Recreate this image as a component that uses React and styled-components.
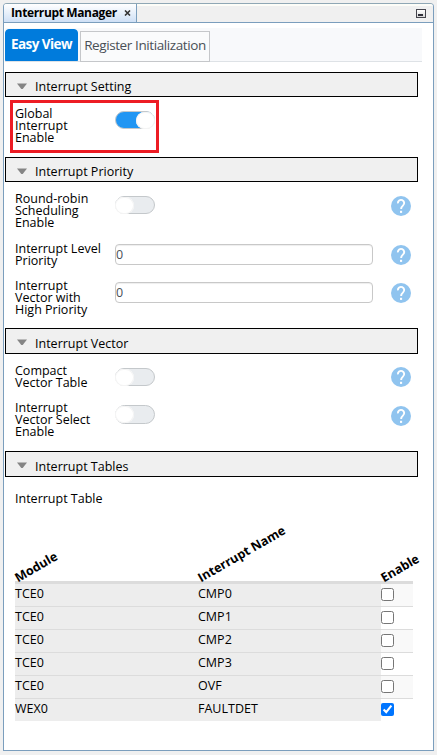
import React, { useState } from "react";
import styled, { createGlobalStyle } from "styled-components";

const Global = createGlobalStyle`
  * { box-sizing: border-box; }
  body { margin: 0; background: #f0f0f0; }
`;

const Page = styled.div`
  width: 437px;
  height: 755px;
  padding: 3px 3px 4px 3px;
  background: #f0f0f0;
  color: #000;
  font: 12.5px/12px "Open Sans", "Noto Sans", sans-serif;
`;

const Window = styled.main`
  width: 431px;
  height: 748px;
  border: 1px solid #7b9ebd;
  border-top-color: #8fa7b5;
  border-radius: 4px 4px 0 0;
  background: #fff;
`;

const TitleBar = styled.header`
  display: flex;
  justify-content: space-between;
  height: 19px;
  border-bottom: 1px solid #7b9ebd;
  border-radius: 3px 3px 0 0;
  background: linear-gradient(#fdfdf8 2px, #f0f0f0 2px);
`;

const WindowTab = styled.div`
  display: flex;
  align-items: center;
  width: 133px;
  height: 18px;
  padding: 0 5px 0 7px;
  border-right: 1px solid #7b9ebd;
  border-radius: 3px 0 0 0;
  background: linear-gradient(#fff, #cfe0f6);
  font-size: 12px;
  font-weight: 700;
  letter-spacing: ${(p) => p.$track || 0}px;
  white-space: nowrap;
`;

const CloseButton = styled.button`
  display: flex;
  margin: 0 0 0 auto;
  padding: 0;
  border: 0;
  background: none;
`;

const MinimizeButton = styled.button`
  width: 10px;
  height: 9px;
  margin: 5px 7px 0 0;
  padding: 4px 1px 1px;
  border: 1px solid #45454d;
  background: linear-gradient(#fff, #d8d8d8);
  &::before {
    content: "";
    display: block;
    width: 5px;
    height: 2px;
    background: #30303a;
  }
`;

const Tabs = styled.nav`
  display: flex;
  align-items: flex-end;
  gap: 2px;
  width: 417px;
  height: 34px;
  margin: 5px 0 0 1px;
  border-bottom: 1px solid #dee2e6;
  background: #f8f9fb;
`;

const Tab = styled.button`
  flex: none;
  width: ${(p) => (p.$active ? 73 : 130)}px;
  height: ${(p) => (p.$active ? 32 : 31)}px;
  margin-bottom: ${(p) => (p.$active ? 0 : -1)}px;
  padding: 0 0 3px;
  border: 1px solid ${(p) => (p.$active ? "#007bdc" : "#c5c7ca")};
  border-radius: ${(p) => (p.$active ? "4px 4px 0 0" : "0")};
  background: ${(p) => (p.$active ? "#007bdc" : "#fafbfc")};
  color: ${(p) => (p.$active ? "#fff" : "#495057")};
  font: ${(p) => (p.$active ? 700 : 400)} 13.5px/16px "Open Sans", "Noto Sans", sans-serif;
  letter-spacing: ${(p) => p.$track}px;
  white-space: nowrap;
`;

const SectionHeader = styled.h2`
  display: flex;
  align-items: center;
  gap: 8px;
  width: 413px;
  height: ${(p) => p.$height}px;
  margin: 0 0 0 1px;
  padding: 5px 0 0 11px;
  border: 1px solid #000;
  background: #f0f0f0;
  font: 400 12.5px/18px "Open Sans", "Noto Sans", sans-serif;
`;

const Arrow = styled.svg`
  display: block;
  margin-top: -3px;
`;

const SectionBody = styled.section`
  height: ${(p) => p.$height}px;
`;

const FirstBody = styled(SectionBody)`
  padding: 3px 0 0 6px;
`;

const Highlight = styled.div`
  width: 149px;
  height: 53px;
  border: 3px solid #ed1c24;
`;

const Row = styled.div`
  display: grid;
  grid-template-columns: 100px 276px 20px;
  align-items: start;
  height: ${(p) => p.$height}px;
  padding-left: ${(p) => (p.$inset ? 2 : 11)}px;
`;

const Label = styled.label`
  padding-top: ${(p) => p.$top}px;
  white-space: pre;
`;

const ToggleTrack = styled.button`
  display: flex;
  justify-content: ${(p) => (p.$on ? "flex-end" : "flex-start")};
  align-items: center;
  width: 40px;
  height: ${(p) => p.$height || 18}px;
  margin: ${(p) => p.$top}px 0 0;
  padding: 0;
  border: 1px solid #c4c8cb;
  border-radius: 10px;
  background: ${(p) => (p.$on ? "#2196f3" : "#e9ecef")};
  &::before {
    content: "";
    flex: none;
    width: 19px;
    height: 17px;
    margin: 0 -1px;
    border-radius: 9px;
    background: #fff;
    box-shadow: inset 0 0 0 1px #f4f4f4;
  }
`;

const NumberInput = styled.input`
  width: 258px;
  height: 21px;
  margin: ${(p) => p.$top}px 0 0;
  padding: 0;
  border: 1px solid #c8c8c8;
  border-radius: 4px;
  outline: 0;
  box-shadow: inset 0 1px 1px #eee;
  background: #fff;
  color: #495057;
  font: 12.5px "Open Sans", "Noto Sans", sans-serif;
`;

const HelpIcon = styled.svg`
  display: block;
  width: 20px;
  height: 20px;
  margin-top: ${(p) => p.$top}px;
`;

const TableTitle = styled.p`
  height: 68px;
  margin: 0;
  padding: 16px 0 0 11px;
  line-height: 12px;
`;

const Table = styled.div`
  width: 398px;
  margin-left: 11px;
`;

const TableRow = styled.div`
  display: grid;
  grid-template-columns: 183px 183px 32px;
  height: ${(p) => (p.$last ? 22 : 23)}px;
  border-bottom: ${(p) => (p.$last ? 0 : 1)}px solid #dcdcdc;
  background: linear-gradient(90deg, #ededed 366px, ${(p) => (p.$odd ? "#f9f9f9" : "#fff")} 366px);
`;

const TableHead = styled(TableRow)`
  align-items: end;
  height: 39px;
  border-bottom: 3px solid #dcdcdc;
  background: none;
  font-weight: 700;
`;

const HeadCell = styled.div`
  width: max-content;
  line-height: 14px;
  white-space: nowrap;
  transform-origin: 0 100%;
  transform: translate(4.5px, 4px) rotate(-30deg);
`;

const Cell = styled.div`
  line-height: 19px;
`;

const Checkbox = styled.input`
  width: 13px;
  height: 13px;
  margin: 4px 0 0;
  accent-color: #0075ff;
`;

function Help({ top }) {
  return (
    <HelpIcon $top={top} viewBox="0 0 20 20">
      <circle cx="10" cy="10" r="10" fill="#90c4ef" />
      <path d="M6.9 7.3a3.15 3.15 0 1 1 5.2 2.1c-1.3 1.1-2 1.7-2 3.6" fill="none" stroke="#fff" strokeWidth="1.9" />
      <rect x="9" y="14.8" width="2.1" height="2.1" fill="#fff" />
    </HelpIcon>
  );
}

function Header({ title, height = 25 }) {
  return (
    <SectionHeader $height={height}>
      <Arrow width="10" height="6"><path d="M0 .5h10L5.7 6H4.3z" fill="#858585" /></Arrow>
      {title}
    </SectionHeader>
  );
}

function Toggle({ top, height, initial = false }) {
  const [on, setOn] = useState(initial);
  return (
    <div>
      <ToggleTrack $on={on} $top={top} $height={height} role="switch" aria-checked={on} onClick={() => setOn(!on)} />
    </div>
  );
}

const rows = [
  ["TCE0", "CMP0"],
  ["TCE0", "CMP1"],
  ["TCE0", "CMP2"],
  ["TCE0", "CMP3"],
  ["TCE0", "OVF"],
  ["WEX0", "FAULTDET", true],
];

export default function App() {
  return (
    <Page>
      <Global />
      <Window>
        <TitleBar>
          <WindowTab $track={-0.36}>
            Interrupt Manager
            <CloseButton aria-label="Close">
              <svg width="7" height="6"><path d="M1 .5l5 5M6 .5l-5 5" stroke="#333" strokeWidth="1.6" /></svg>
            </CloseButton>
          </WindowTab>
          <MinimizeButton aria-label="Minimize" />
        </TitleBar>
        <Tabs>
          <Tab $active $track={-0.55}>Easy View</Tab>
          <Tab $track={-0.4}>Register Initialization</Tab>
        </Tabs>
        <SectionBody $height={10} />

        <Header title="Interrupt Setting" />
        <FirstBody $height={60}>
          <Highlight>
            <Row $height={47} $inset>
              <Label $top={5}>{"Global\nInterrupt\nEnable"}</Label>
              <Toggle top={8} initial />
            </Row>
          </Highlight>
        </FirstBody>

        <Header title="Interrupt Priority" />
        <SectionBody $height={146}>
          <Row $height={50}>
            <Label $top={11}>{"Round-robin\nScheduling\nEnable"}</Label>
            <Toggle top={14} />
            <Help top={14} />
          </Row>
          <Row $height={38}>
            <Label $top={11}>{"Interrupt Level\nPriority"}</Label>
            <NumberInput $top={12} defaultValue="0" />
            <Help top={13} />
          </Row>
          <Row $height={58}>
            <Label $top={10}>{"Interrupt\nVector with\nHigh Priority"}</Label>
            <NumberInput $top={12} defaultValue="0" />
            <Help top={13} />
          </Row>
        </SectionBody>

        <Header title="Interrupt Vector" height={26} />
        <SectionBody $height={97}>
          <Row $height={38}>
            <Label $top={11}>{"Compact\nVector Table"}</Label>
            <Toggle top={14} />
            <Help top={13} />
          </Row>
          <Row $height={59}>
            <Label $top={10}>{"Interrupt\nVector Select\nEnable"}</Label>
            <Toggle top={13} height={19} />
            <Help top={14} />
          </Row>
        </SectionBody>

        <Header title="Interrupt Tables" height={26} />
        <TableTitle>Interrupt Table</TableTitle>
        <Table>
          <TableHead>
            <HeadCell>Module</HeadCell>
            <HeadCell>Interrupt Name</HeadCell>
            <HeadCell>Enable</HeadCell>
          </TableHead>
          {rows.map(([module, name, checked], i) => (
            <TableRow key={name} $odd={i % 2 === 0} $last={i === rows.length - 1}>
              <Cell>{module}</Cell>
              <Cell>{name}</Cell>
              <Checkbox type="checkbox" defaultChecked={checked} />
            </TableRow>
          ))}
        </Table>
      </Window>
    </Page>
  );
}
